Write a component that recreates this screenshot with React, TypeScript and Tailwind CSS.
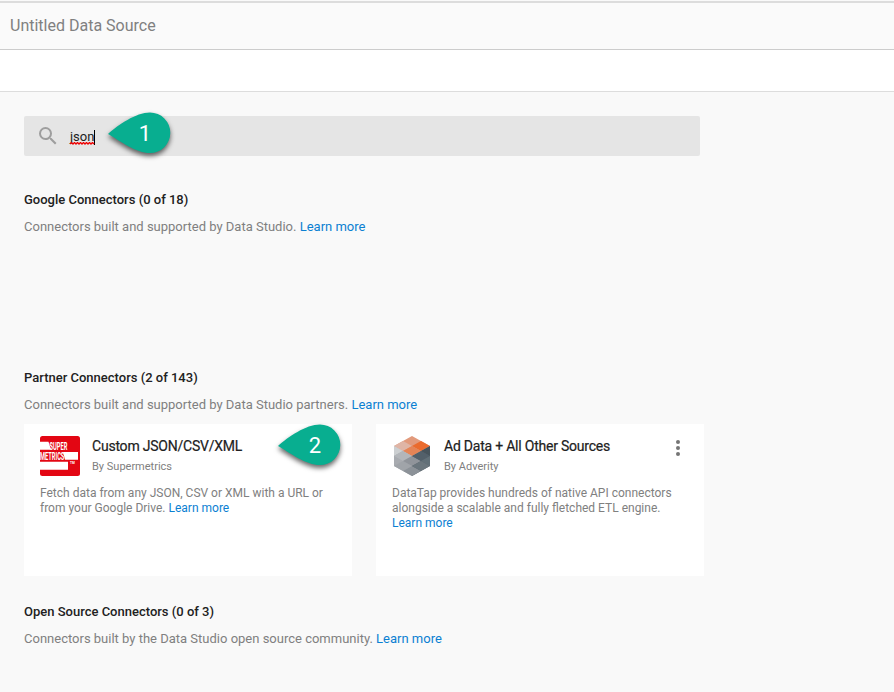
import type { ReactNode } from "react";

function LearnMore() {
  return <a className="text-[#0b80d2]">Learn more</a>;
}

function Section({ title, children }: { title: string; children: ReactNode }) {
  return (
    <div className="whitespace-nowrap">
      <h2 className="text-[13px] font-medium leading-4 text-[#212121]">{title}</h2>
      <p className="mt-[11px] text-[13px] leading-4 text-[#808080]">
        {children} <LearnMore />
      </p>
    </div>
  );
}

function Pin({ label }: { label: string }) {
  return (
    <svg width="80" height="60" viewBox="0 0 80 60" className="overflow-visible">
      <path
        d="M8 25 C18 16 36 3.5 50 3.5 A20.3 20.3 0 0 1 50 44.1 C36 44.1 20 32 8 25Z"
        fill="#08ae90"
        className="drop-shadow-[0_3px_2.5px_rgba(0,0,0,0.6)]"
      />
      <text x="45" y="32" textAnchor="middle" fill="#fff" fontSize="22" fontFamily="Roboto, sans-serif">
        {label}
      </text>
    </svg>
  );
}

function SupermetricsLogo() {
  return (
    <svg width="40" height="40" viewBox="0 0 40 40">
      <rect width="40" height="40" rx="2.5" fill="#e30613" />
      <path d="M0 5.7H8.5L11 13.7H0Z M23 16H38V23.7H25Z M0 25.7H28V33.7H0Z" fill="#fff" />
      <g fill="#fff" fontFamily="Roboto, sans-serif" fontWeight="700">
        <text transform="translate(9.5 13.7) scale(0.52 1)" fontSize="11">SUPER</text>
        <text transform="translate(0 23.7) scale(0.52 1)" fontSize="11">METRICS</text>
        <text transform="translate(30 28.3) scale(0.9 1)" fontSize="3.5">TM</text>
      </g>
    </svg>
  );
}

function AdverityLogo() {
  return (
    <svg width="40" height="40" viewBox="0 0 40 40" shapeRendering="geometricPrecision">
      <path d="M20 0L38 10L20 20L2 10Z" fill="#e29a7c" />
      <path d="M2 10L20 20V40L2 30Z" fill="#a9acb1" />
      <path d="M20 20L38 10V30L20 40Z" fill="#56636b" />
      <path d="M29 5L38 10L29 15L20 10Z" fill="#ea6b2e" />
      <path d="M11 5L20 10L11 15L2 10Z" fill="#dfb5a6" />
      <path d="M20 10L29 15L20 20L11 15Z" fill="#e58456" />
      <path d="M2 10L11 15L2 20Z" fill="#cccfd1" />
      <path d="M2 20L11 15V25Z" fill="#b5b9bc" />
      <path d="M11 15L20 20L11 25L2 20Z" fill="#b3b6ba" />
      <path d="M2 20L11 25L2 30Z" fill="#a8abb0" />
      <path d="M11 25L20 30L11 35L2 30Z" fill="#a0a4a9" />
      <path d="M11 35L20 30L29 35L20 40Z" fill="#8c9298" />
      <path d="M11 25L20 20L29 25L20 30Z" fill="#90949a" />
      <path d="M38 10V20L29 15Z" fill="#48545c" />
      <path d="M20 20L29 15L38 20L29 25Z" fill="#53606a" />
      <path d="M38 20V30L29 25Z" fill="#627078" />
      <path d="M20 30L29 25L38 30L29 35Z" fill="#6b767d" />
    </svg>
  );
}

function Card({ logo, title, by, children }: { logo: ReactNode; title: string; by: string; children: ReactNode }) {
  return (
    <article className="relative h-[152px] w-[328px] bg-white px-4 pt-3">
      <div className="flex gap-3">
        {logo}
        <div className="whitespace-nowrap">
          <h3 className="mt-[2px] text-[14px] leading-4 tracking-[-0.22px] text-[#212121] [-webkit-text-stroke:0.2px_#212121]">{title}</h3>
          <p className="mt-[6px] text-[11px] leading-[14px] text-[#808080]">{by}</p>
        </div>
      </div>
      <p className="mt-[10px] whitespace-nowrap text-[12px] leading-[15px] text-[#808080]">{children}</p>
    </article>
  );
}

export default function App() {
  return (
    <div className="h-[692px] w-[894px] overflow-hidden bg-[#f9f9f9] font-[Roboto,sans-serif]">
      <div className="h-px bg-[#f9f9f9]" />
      <header className="flex h-[49px] items-center border-b border-t-2 border-b-[#cccccc] border-t-[#dcdcdc] bg-[#fafafa] pl-[10px]">
        <h1 className="text-[16px] leading-5 text-[#808080]">Untitled Data Source</h1>
      </header>
      <div className="h-[42px] border-b border-[#dddddd] bg-white" />
      <main className="pl-6 pt-6">
        <div className="relative flex h-10 w-[676px] items-center rounded-[2px] bg-[#e5e5e5] pl-3">
          <svg width="24" height="24" viewBox="0 0 24 24" fill="#9e9e9e">
            <path d="M15.5 14h-.79l-.28-.27A6.471 6.471 0 0 0 16 9.5 6.5 6.5 0 1 0 9.5 16c1.61 0 3.09-.59 4.23-1.57l.27.28v.79l5 4.99L20.49 19l-4.99-5zm-6 0C7.01 14 5 11.99 5 9.5S7.01 5 9.5 5 14 7.01 14 9.5 11.99 14 9.5 14z" />
          </svg>
          <div className="ml-[10px] mt-[2px] flex items-center">
            <span className="relative text-[13px] leading-4 text-[#212121]">
              json
              <svg width="25" height="3" className="absolute left-0 top-[13px]">
                <path d="M0 2l1.5-1.5L3 2l1.5-1.5L6 2l1.5-1.5L9 2l1.5-1.5L12 2l1.5-1.5L15 2l1.5-1.5L18 2l1.5-1.5L21 2l1.5-1.5L24 2" fill="none" stroke="#f00000" strokeWidth="1.3" />
              </svg>
            </span>
            <span className="h-[15px] w-px bg-black" />
          </div>
          <div className="absolute left-[76px] top-[-7px]">
            <Pin label="1" />
          </div>
        </div>
        <div className="mt-9 h-[178px]">
          <Section title="Google Connectors (0 of 18)">Connectors built and supported by Data Studio.</Section>
        </div>
        <Section title="Partner Connectors (2 of 143)">Connectors built and supported by Data Studio partners.</Section>
        <div className="mb-7 mt-[11px] flex gap-6">
          <Card logo={<SupermetricsLogo />} title="Custom JSON/CSV/XML" by="By Supermetrics">
            Fetch data from any JSON, CSV or XML with a URL or
            <br />
            from your Google Drive. <LearnMore />
            <span className="absolute left-[246px] top-[-3px]">
              <Pin label="2" />
            </span>
          </Card>
          <Card logo={<AdverityLogo />} title="Ad Data + All Other Sources" by="By Adverity">
            DataTap provides hundreds of native API connectors
            <br />
            alongside a scalable and fully fletched ETL engine.
            <br />
            <LearnMore />
            <svg width="24" height="24" viewBox="0 0 24 24" fill="#757575" className="absolute right-[14px] top-3">
              <circle cx="12" cy="6" r="2" />
              <circle cx="12" cy="12" r="2" />
              <circle cx="12" cy="18" r="2" />
            </svg>
          </Card>
        </div>
        <Section title="Open Source Connectors (0 of 3)">Connectors built by the Data Studio open source community.</Section>
      </main>
    </div>
  );
}
